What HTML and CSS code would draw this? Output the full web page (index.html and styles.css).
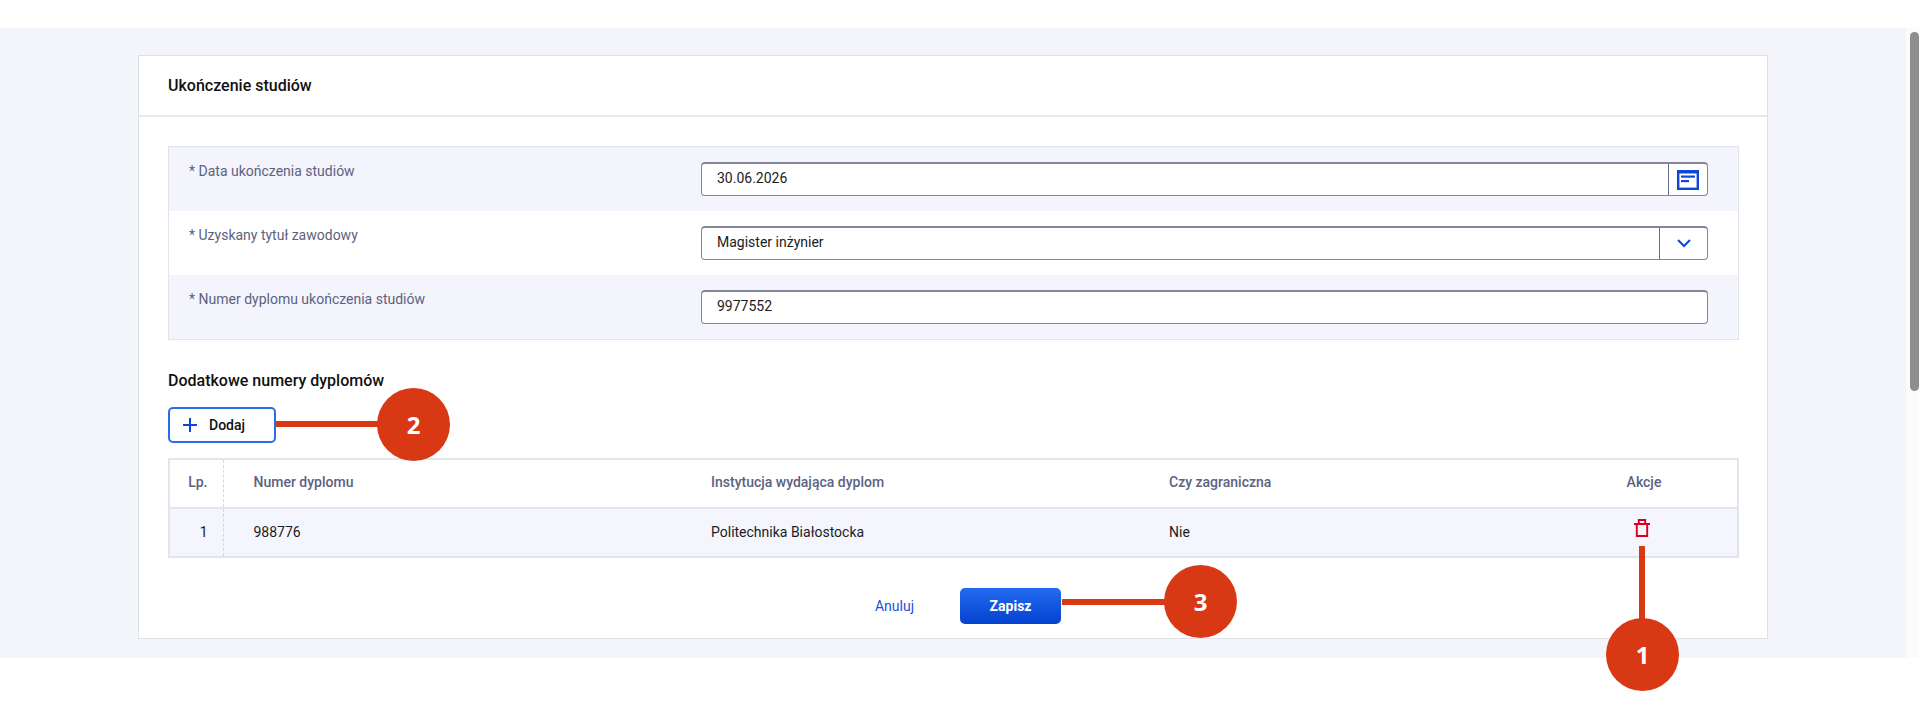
FILE: index.html
```html
<!DOCTYPE html>
<html lang="pl">
<head>
    <meta charset="UTF-8">
    <meta name="viewport" content="width=device-width, initial-scale=1.0">
    <title>Ukończenie studiów</title>
    <link rel="stylesheet" href="styles.css">
</head>
<body>
    <div class="page">
        <main class="content">
            <section class="card">
                <h2 class="card-title">Ukończenie studiów</h2>
                <div class="card-body">
                    <div class="form-panel">
                        <div class="form-row">
                            <div class="form-label">* Data ukończenia studiów</div>
                            <div class="field">
                                <div class="field-value">30.06.2026</div>
                                <div class="field-addon addon-date">
                                    <svg width="22" height="20" viewBox="0 0 22 20">
                                        <rect x="1.2" y="1.5" width="19.6" height="17.3" fill="none" stroke="#0d47d9" stroke-width="2.4"/>
                                        <rect x="0" y="0" width="22" height="3.5" fill="#0d47d9"/>
                                        <rect x="4" y="5.5" width="14" height="2.2" fill="#0d47d9"/>
                                        <rect x="4" y="10" width="8" height="2.2" fill="#0d47d9"/>
                                    </svg>
                                </div>
                            </div>
                        </div>
                        <div class="form-row">
                            <div class="form-label">* Uzyskany tytuł zawodowy</div>
                            <div class="field">
                                <div class="field-value">Magister inżynier</div>
                                <div class="field-addon addon-select">
                                    <svg width="14" height="9" viewBox="0 0 14 9">
                                        <path d="M1 1l6 6 6-6" fill="none" stroke="#0d47d9" stroke-width="2"/>
                                    </svg>
                                </div>
                            </div>
                        </div>
                        <div class="form-row">
                            <div class="form-label">* Numer dyplomu ukończenia studiów</div>
                            <div class="field">
                                <div class="field-value">9977552</div>
                            </div>
                        </div>
                    </div>

                    <h3 class="sub-title">Dodatkowe numery dyplomów</h3>
                    <button class="add-button">
                        <svg width="14" height="14" viewBox="0 0 14 14">
                            <path d="M7 0v14M0 7h14" fill="none" stroke="#0d47d9" stroke-width="2"/>
                        </svg>
                        Dodaj
                    </button>

                    <table class="diploma-table">
                        <colgroup>
                            <col class="col-lp">
                            <col class="col-number">
                            <col class="col-inst">
                            <col class="col-foreign">
                            <col class="col-actions">
                        </colgroup>
                        <thead>
                            <tr>
                                <th class="cell-lp">Lp.</th>
                                <th>Numer dyplomu</th>
                                <th>Instytucja wydająca dyplom</th>
                                <th>Czy zagraniczna</th>
                                <th class="cell-actions">Akcje</th>
                            </tr>
                        </thead>
                        <tbody>
                            <tr>
                                <td class="cell-lp">1</td>
                                <td>988776</td>
                                <td>Politechnika Białostocka</td>
                                <td>Nie</td>
                                <td class="cell-actions">
                                    <svg class="trash" width="16" height="18" viewBox="0 0 16 18">
                                        <path d="M0 5h16M4.8 4.5V1h6.4v3.5M2.8 5v12h10.4V5" fill="none" stroke="#d8001c" stroke-width="1.9"/>
                                    </svg>
                                </td>
                            </tr>
                        </tbody>
                    </table>

                    <div class="form-actions">
                        <a class="cancel-link" href="#">Anuluj</a>
                        <button class="save-button">Zapisz</button>
                    </div>
                </div>
            </section>
        </main>
        <div class="scrollbar"><div class="scrollbar-thumb"></div></div>
    </div>

    <!-- Znaczniki instrukcji nałożone na zrzut -->
    <div class="marker-line line-add"></div>
    <div class="marker marker-add">2</div>
    <div class="marker-line line-save"></div>
    <div class="marker marker-save">3</div>
    <div class="marker-line line-delete"></div>
    <div class="marker marker-delete">1</div>
</body>
</html>
```

FILE: styles.css
```css
* {
    box-sizing: border-box;
}

html, body {
    height: 100%;
}

body {
    margin: 0;
    background-color: #fff;
    font-family: Roboto, "Liberation Sans", sans-serif;
    font-size: 14px;
    color: #1c1c24;
    overflow: hidden;
    position: relative;
}

.page {
    display: flex;
    align-items: flex-start;
    padding-top: 28px;
}

.content {
    flex: 1;
    background-color: #f4f5fa;
    padding: 27px 138px 19px 138px;
}

.scrollbar {
    width: 14px;
    height: 630px;
    background-color: #fbfbfb;
    padding: 4px 0 0 4px;
}

.scrollbar-thumb {
    width: 9px;
    height: 359px;
    background-color: #8e8e8e;
    border-radius: 5px;
}

.card {
    background-color: #fff;
    border: 1px solid #dfe1e8;
}

.card-title {
    margin: 0;
    height: 61px;
    padding-left: 29px;
    line-height: 60px;
    font-size: 16px;
    font-weight: 500;
    color: #111;
    border-bottom: 2px solid #e8e9ee;
}

.card-body {
    padding: 29px 28px 14px 29px;
}

.form-panel {
    background-color: #f3f4fc;
    border: 1px solid #e2e4ec;
}

.form-row {
    display: flex;
    height: 64px;
    padding: 15px 30px 0 20px;
}

.form-row:nth-child(2) {
    background-color: #fff;
}

.form-label {
    width: 512px;
    line-height: 18px;
    font-size: 14px;
    color: #5c6280;
}

.field {
    flex: 1;
    display: flex;
    height: 34px;
    background-color: #fff;
    border: 1px solid #84849a;
    border-top-width: 2px;
    border-radius: 4px;
}

.field-value {
    flex: 1;
    padding-left: 15px;
    line-height: 28px;
    font-size: 14px;
}

.field-addon {
    display: flex;
    align-items: center;
    justify-content: center;
    border-left: 1px solid #6b6b80;
}

.addon-date {
    width: 39px;
}

.addon-select {
    width: 48px;
}

.sub-title {
    margin: 31px 0 16px;
    line-height: 20px;
    font-size: 16px;
    font-weight: 500;
    color: #111;
}

.add-button {
    display: flex;
    align-items: center;
    gap: 12px;
    width: 108px;
    height: 36px;
    padding: 0 0 1px 13px;
    background-color: #fff;
    border: 2px solid #2b6ae8;
    border-radius: 5px;
    font-family: inherit;
    font-size: 14px;
    font-weight: 500;
    color: #111;
}

.diploma-table {
    width: 1569px;
    margin-top: 15px;
    table-layout: fixed;
    border-collapse: collapse;
    border: 2px solid #e3e5ec;
}

.col-lp { width: 54px; }
.col-number { width: 458px; }
.col-inst { width: 458px; }
.col-foreign { width: 412px; }
.col-actions { width: 187px; }

.diploma-table th,
.diploma-table td {
    padding: 0 0 3px 30px;
    text-align: left;
    font-size: 14px;
}

.diploma-table th {
    height: 49px;
    font-weight: 500;
    color: #5c6280;
    border-bottom: 2px solid #e3e5ec;
}

.diploma-table td {
    height: 49px;
    padding-bottom: 1px;
    background-color: #f4f5fd;
}

.diploma-table .cell-lp {
    padding-left: 0;
    padding-right: 15px;
    text-align: right;
    border-right: 1px dashed #d5d7df;
}

.diploma-table .cell-actions {
    padding-left: 0;
    text-align: center;
}

.trash {
    display: block;
    margin: -8px 0 0 83px;
}

.form-actions {
    display: flex;
    justify-content: center;
    align-items: center;
    gap: 46px;
    margin-top: 30px;
    padding-left: 29px;
}

.cancel-link {
    font-size: 14px;
    color: #1c50dc;
    text-decoration: none;
}

.save-button {
    width: 101px;
    height: 36px;
    border: none;
    border-radius: 5px;
    background: linear-gradient(#216bf0, #0542cf);
    font-family: inherit;
    font-size: 14px;
    font-weight: 700;
    color: #fff;
}

/* Znaczniki */
.marker {
    position: absolute;
    width: 73px;
    height: 73px;
    border-radius: 50%;
    background-color: #d93815;
    color: #fff;
    font-family: "Open Sans", sans-serif;
    font-size: 24px;
    font-weight: 700;
    line-height: 73px;
    text-align: center;
}

.marker-line {
    position: absolute;
    background-color: #d93815;
}

.marker-add { left: 377px; top: 388px; }
.marker-save { left: 1164px; top: 565px; }
.marker-delete { left: 1606px; top: 618px; }

.line-add { left: 276px; top: 421px; width: 104px; height: 6px; }
.line-save { left: 1062px; top: 599px; width: 104px; height: 6px; }
.line-delete { left: 1639px; top: 546px; width: 6px; height: 74px; }
```
